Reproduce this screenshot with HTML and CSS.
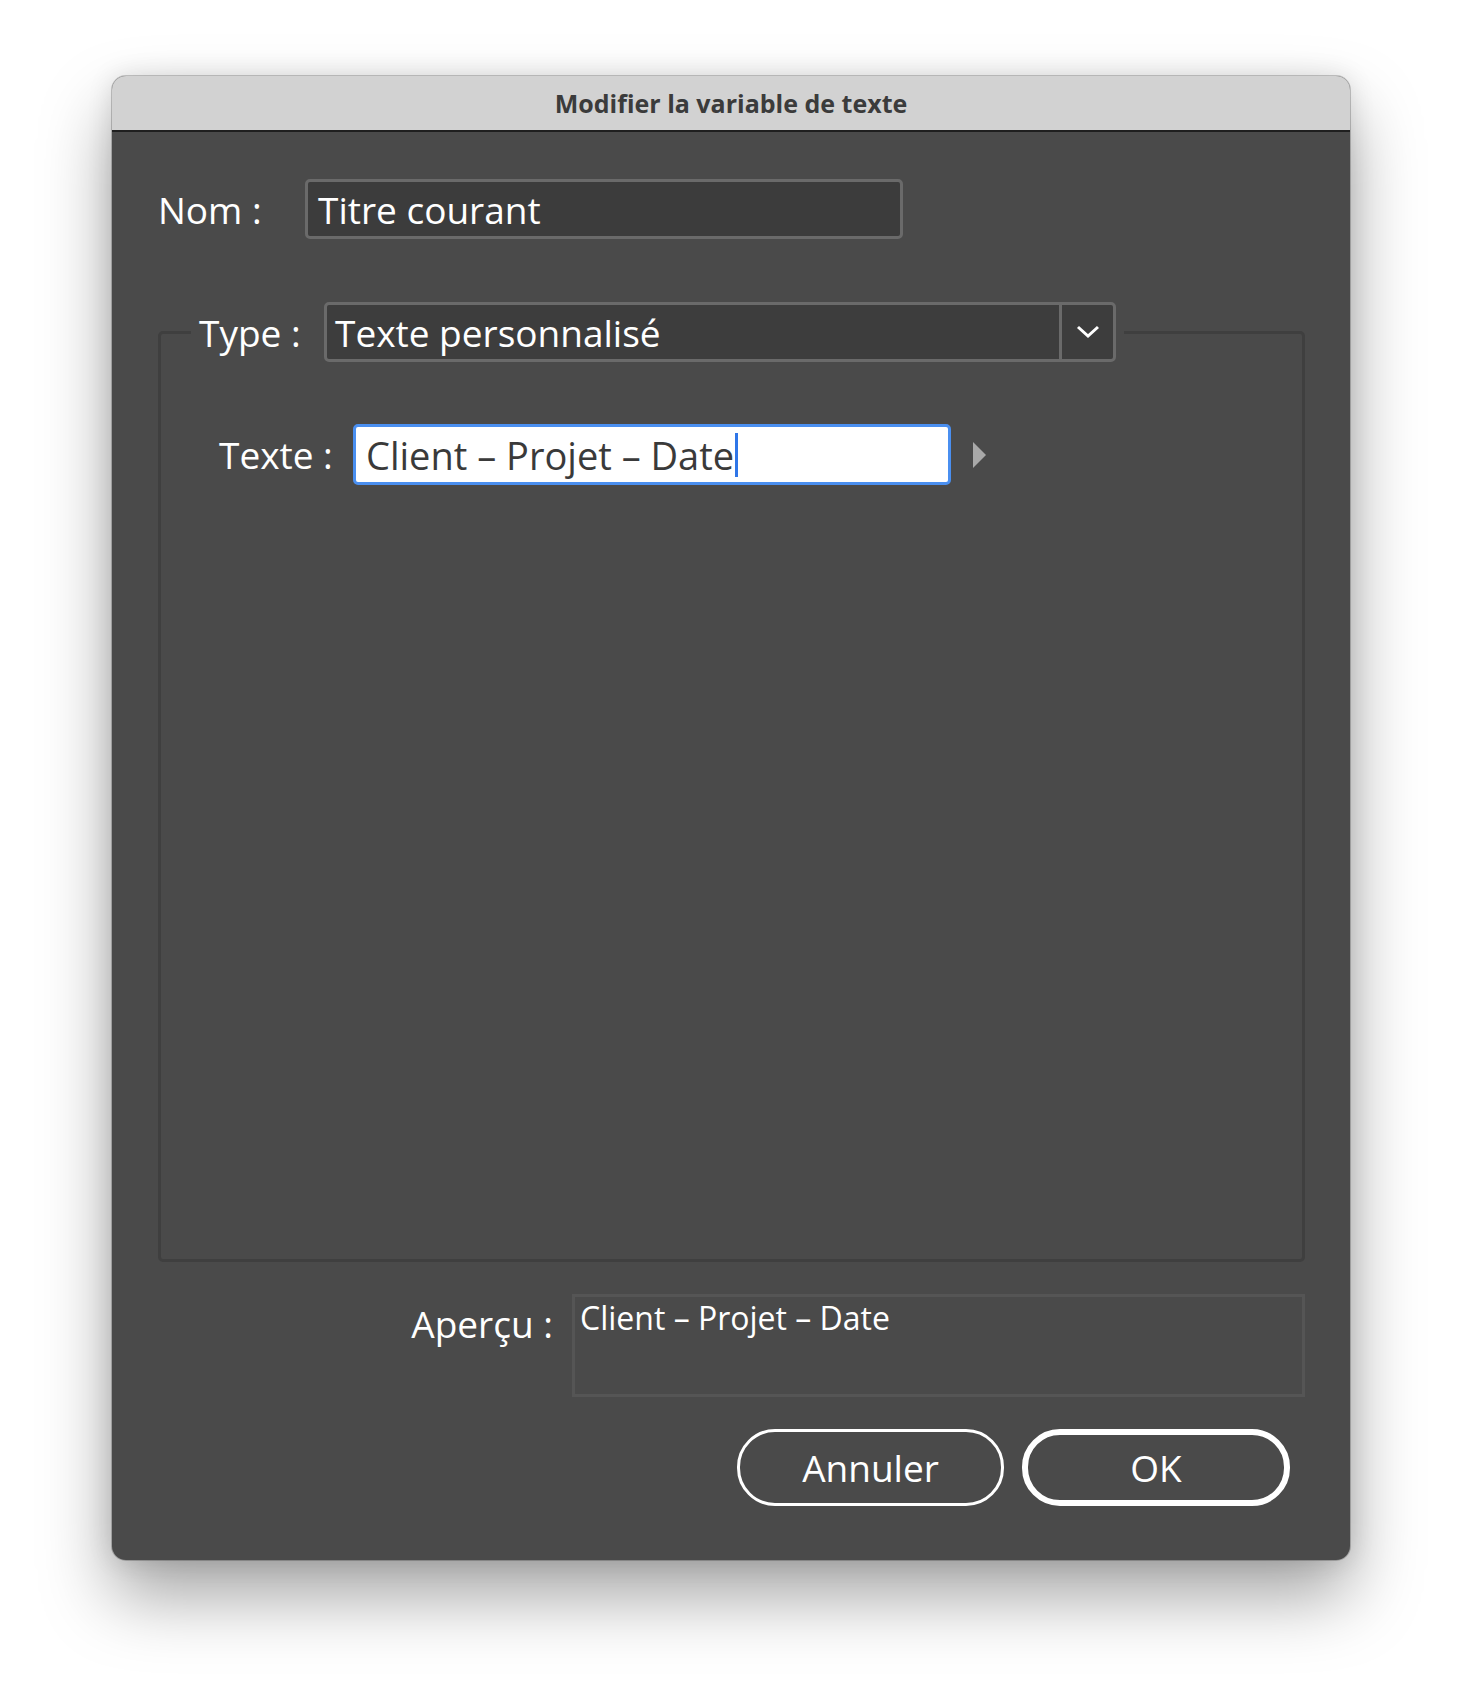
FILE: index.html
```html
<!DOCTYPE html>
<html lang="fr">
    <head>
        <meta charset="utf-8">
        <title>Modifier la variable de texte</title>
        <link rel="stylesheet" href="styles.css">
    </head>
    <body>
        <div class="dlg">
            <div class="dlg_title">Modifier la variable de texte</div>
            <div class="dlg_body">
                <div class="row row_nom">
                    <span class="lbl lbl_nom">Nom :</span>
                    <div class="field field_nom">Titre courant</div>
                </div>
                <fieldset class="grp">
                    <legend class="grp_legend">
                        <div class="legend_row">
                            <span class="lbl lbl_type">Type :</span>
                            <div class="select">
                                <span class="select_val">Texte personnalisé</span>
                                <span class="select_btn">
                                    <svg width="24" height="14" viewBox="0 0 24 14"><polyline points="2,2 12,11 22,2" fill="none" stroke="#fff" stroke-width="3"/></svg>
                                </span>
                            </div>
                        </div>
                    </legend>
                    <div class="row row_texte">
                        <span class="lbl lbl_texte">Texte :</span>
                        <div class="field field_texte">Client – Projet – Date<span class="caret"></span></div>
                        <span class="arrow"></span>
                    </div>
                </fieldset>
                <div class="row row_apercu">
                    <span class="lbl lbl_apercu">Aperçu :</span>
                    <div class="preview">Client – Projet – Date</div>
                </div>
                <div class="buttons">
                    <button class="btn">Annuler</button>
                    <button class="btn btn_ok">OK</button>
                </div>
            </div>
        </div>
    </body>
</html>
```

FILE: styles.css
```css
html, body{
    margin: 0;
    background: #fff;
}
body{
    font-family: "Open Sans", "Noto Sans", sans-serif;
    padding: 76px 0 0 112px;
    min-height: 1708px;
    box-sizing: border-box;
}
.dlg{
    width: 1238px;
    height: 1484px;
    background: #4a4a4a;
    border-radius: 14px;
    box-shadow: 0 36px 70px rgba(0, 0, 0, .36), 0 0 26px rgba(0, 0, 0, .12), 0 0 0 1px rgba(0, 0, 0, .2);
    overflow: hidden;
}
.dlg_title{
    height: 54px;
    line-height: 54px;
    background: #d2d2d2;
    border-bottom: 2px solid #1f1f1f;
    text-align: center;
    font-size: 25px;
    font-weight: 700;
    color: #3b3b3b;
}
.dlg_body{
    padding: 47px 45px 0 46px;
}
.row{
    display: flex;
    align-items: center;
}
.lbl{
    font-size: 37px;
    color: #fff;
    white-space: nowrap;
}
.lbl_nom{
    width: 147px;
}
.field{
    box-sizing: border-box;
    border-radius: 5px;
    font-size: 37px;
    white-space: nowrap;
    display: flex;
    align-items: center;
}
.field_nom{
    width: 598px;
    height: 60px;
    background: #3c3c3c;
    border: 3px solid #6a6a6a;
    color: #fff;
    padding-left: 10px;
}
.grp{
    margin: 63px 0 0 0;
    padding: 62px 0 0 0;
    height: 960px;
    box-sizing: border-box;
    border: 3px solid #3f3f3f;
    border-radius: 5px;
    min-width: 0;
}
.grp_legend{
    margin-left: 30px;
    padding: 0 8px;
}
.legend_row{
    display: flex;
    align-items: center;
}
.lbl_type{
    width: 125px;
}
.select{
    box-sizing: border-box;
    width: 792px;
    height: 60px;
    display: flex;
    background: #3d3d3d;
    border: 3px solid #6a6a6a;
    border-radius: 5px;
}
.select_val{
    flex: 1;
    display: flex;
    align-items: center;
    padding-left: 8px;
    font-size: 37px;
    color: #fff;
    border-right: 3px solid #6a6a6a;
}
.select_btn{
    width: 51px;
    display: flex;
    align-items: center;
    justify-content: center;
}
.row_texte{
    margin-left: 58px;
}
.lbl_texte{
    width: 134px;
}
.field_texte{
    width: 598px;
    height: 61px;
    background: #fff;
    border: 3px solid #4a8ff0;
    color: #3a3a3a;
    padding-left: 10px;
    font-size: 38px;
}
.caret{
    display: inline-block;
    width: 3px;
    height: 44px;
    background: #2f76e8;
    margin-left: 1px;
}
.arrow{
    margin-left: 22px;
    width: 0;
    height: 0;
    border-top: 13px solid transparent;
    border-bottom: 13px solid transparent;
    border-left: 13px solid #a9a9a9;
}
.row_apercu{
    margin-top: 32px;
    justify-content: flex-end;
    align-items: flex-start;
}
.lbl_apercu{
    margin: 4px 19px 0 0;
}
.preview{
    box-sizing: border-box;
    width: 733px;
    height: 103px;
    border: 3px solid #555;
    padding: 0 0 0 5px;
    font-size: 32px;
    line-height: 42px;
    color: #fff;
}
.buttons{
    margin: 32px 15px 0 0;
    display: flex;
    justify-content: flex-end;
    gap: 18px;
}
.btn{
    box-sizing: border-box;
    width: 267px;
    height: 77px;
    border: 3px solid #fff;
    border-radius: 38px;
    background: transparent;
    color: #fff;
    font-family: "Open Sans", "Noto Sans", sans-serif;
    font-size: 37px;
    padding: 0;
}
.btn_ok{
    width: 268px;
    border-width: 6px;
}
```
